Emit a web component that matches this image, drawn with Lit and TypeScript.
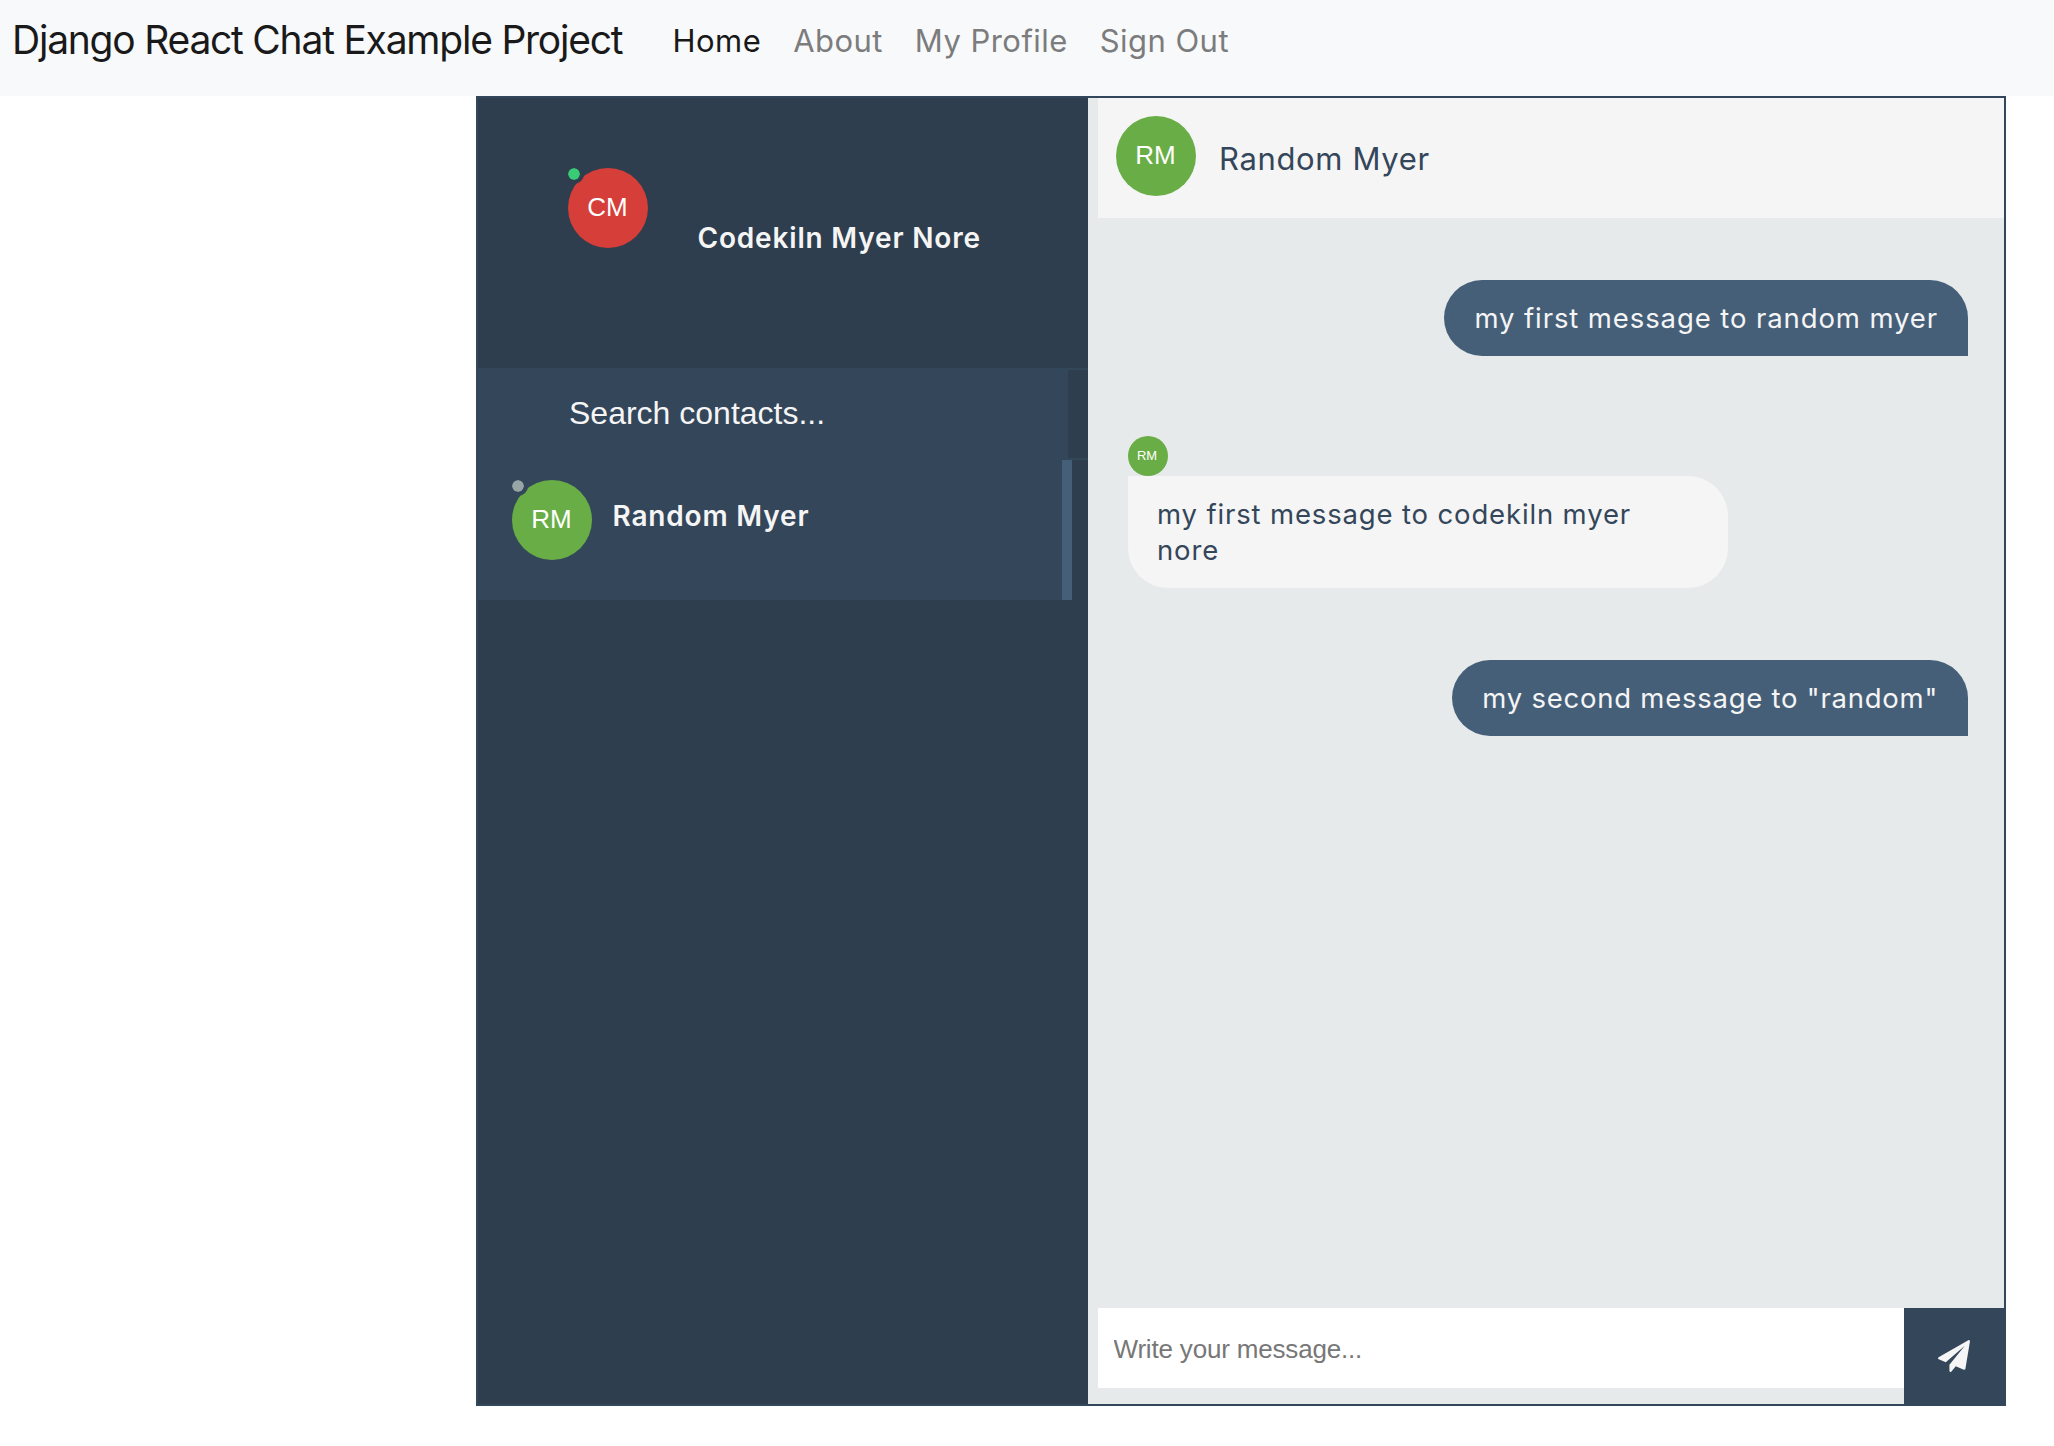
import { LitElement, html, css, nothing } from "lit";
import { customElement, property } from "lit/decorators.js";
import { classMap } from "lit/directives/class-map.js";
import { styleMap } from "lit/directives/style-map.js";

interface Message {
  text: string;
  sent: boolean;
  tracking: number;
}

const NAV = ["Home", "About", "My Profile", "Sign Out"];

const MESSAGES: Message[] = [
  { text: "my first message to random myer", sent: true, tracking: 0.9 },
  { text: "my first message to codekiln myer nore", sent: false, tracking: 0.85 },
  { text: 'my second message to "random"', sent: true, tracking: 0.76 },
];

@customElement("user-avatar")
export class UserAvatar extends LitElement {
  @property() initials = "";
  @property() tone = "green";
  @property() status = "";
  @property({ type: Boolean }) small = false;

  static styles = css`
    :host {
      display: block;
      flex: none;
    }
    .circle {
      position: relative;
      box-sizing: border-box;
      display: flex;
      align-items: center;
      justify-content: center;
      width: 80px;
      height: 80px;
      padding: 0 1px 2px 0;
      border-radius: 50%;
      color: #fff;
      font: 26px/30px "Liberation Sans", Arial, sans-serif;
    }
    .small {
      width: 40px;
      height: 40px;
      padding: 0 2px 0 0;
      font-size: 13px;
      line-height: 16px;
    }
    .green {
      background: #69ad46;
    }
    .red {
      background: #d53e39;
    }
    .dot {
      position: absolute;
      left: -4px;
      top: -4px;
      width: 12px;
      height: 12px;
      border: 4px solid;
      border-radius: 50%;
      background-clip: padding-box;
    }
    .online {
      background-color: #3acc74;
      border-color: #2e3e4e;
    }
    .offline {
      background-color: #96a5a6;
      border-color: #34465a;
    }
  `;

  render() {
    return html`<div
      class=${classMap({ circle: true, small: this.small, [this.tone]: true })}
    >
      ${this.initials}
      ${this.status ? html`<span class="dot ${this.status}"></span>` : nothing}
    </div>`;
  }
}

@customElement("app-root")
export class AppRoot extends LitElement {
  static styles = css`
    :host {
      display: block;
      min-height: 1446px;
      background: #fff;
      font-family: Inter, "Noto Sans", sans-serif;
    }
    .navbar {
      display: flex;
      align-items: center;
      box-sizing: border-box;
      height: 96px;
      padding: 0 0 16px 12px;
      background: #f8f9fb;
      white-space: nowrap;
    }
    .brand {
      width: 644.5px;
      font-size: 39px;
      line-height: 60px;
      letter-spacing: -1.23px;
      color: #1a1a1a;
    }
    .links {
      display: flex;
      padding-top: 2px;
    }
    .link {
      padding: 0 16px;
      font-size: 31px;
      line-height: 48px;
      letter-spacing: 0.45px;
      color: #7c7c7d;
    }
    .current {
      color: #181819;
    }
    .frame {
      display: flex;
      box-sizing: border-box;
      width: 1530px;
      height: 1310px;
      margin-left: 476px;
      border: 2px solid #32475b;
    }
    .side {
      display: flex;
      flex-direction: column;
      width: 610px;
      background: #2e3e4e;
      color: #f5f5f5;
    }
    .profile {
      display: flex;
      box-sizing: border-box;
      height: 270px;
      padding: 70px 0 0 90px;
    }
    .name {
      font-size: 28px;
      line-height: 40px;
      font-weight: 600;
      letter-spacing: 0.82px;
      white-space: nowrap;
    }
    .profile .name {
      margin: 50px 0 0 49.5px;
    }
    .search {
      display: flex;
      height: 88px;
      border-top: 2px solid #33475a;
      border-bottom: 2px solid #33475a;
    }
    .search-input {
      box-sizing: border-box;
      width: 590px;
      height: 88px;
      padding: 0 0 2px 91px;
      border: 0;
      border-radius: 0;
      outline: 0;
      background: #34465a;
      color: #f5f5f5;
      font: 32px "Liberation Sans", Arial, sans-serif;
    }
    .search-input::placeholder {
      color: #f5f5f5;
      opacity: 1;
    }
    .contact {
      display: flex;
      box-sizing: border-box;
      width: 594px;
      height: 140px;
      padding: 20px 0 0 34px;
      border-right: 10px solid #465f79;
      background: #34465a;
    }
    .contact .name {
      margin: 16px 0 0 20.5px;
    }
    .content {
      display: flex;
      flex: 1;
      flex-direction: column;
      min-width: 0;
      padding-left: 10px;
      background: #e6eaea;
    }
    .head {
      display: flex;
      box-sizing: border-box;
      height: 120px;
      padding: 18px 0 0 18px;
      background: #f5f5f5;
    }
    .title {
      margin: 19px 0 0 23px;
      font-size: 31px;
      line-height: 48px;
      letter-spacing: 0.65px;
      color: #34465a;
    }
    .messages {
      display: flex;
      flex: 1;
      flex-direction: column;
      padding: 62px 36px 0 30px;
    }
    .message {
      display: flex;
      flex-direction: column;
      align-items: flex-start;
      margin-bottom: 72px;
    }
    .mine {
      align-items: flex-end;
      margin-bottom: 80px;
    }
    .bubble {
      box-sizing: border-box;
      max-width: 600px;
      padding: 20px 30px 20px 29px;
      border-radius: 0 40px 40px 40px;
      background: #f5f5f5;
      color: #34465a;
      font-size: 27.5px;
      line-height: 36px;
    }
    .mine .bubble {
      padding: 20px 30px;
      border-radius: 38px 38px 0 38px;
      background: #465f79;
      color: #f5f5f5;
      white-space: nowrap;
    }
    .composer {
      display: flex;
      align-items: flex-start;
      height: 96px;
    }
    .message-input {
      box-sizing: border-box;
      flex: 1;
      min-width: 0;
      height: 80px;
      padding: 2px 0 0 15.5px;
      border: 0;
      border-radius: 0;
      outline: 0;
      background: #fff;
      font: 26px "Liberation Sans", Arial, sans-serif;
      letter-spacing: -0.18px;
    }
    .message-input::placeholder {
      color: #777;
      opacity: 1;
    }
    .send {
      display: flex;
      align-items: center;
      justify-content: center;
      width: 100px;
      height: 96px;
      padding: 0;
      border: 0;
      background: #34465a;
    }
    .plane {
      width: 32px;
      height: 32px;
      fill: #f5f5f5;
    }
  `;

  render() {
    return html`
      <nav class="navbar">
        <div class="brand">Django React Chat Example Project</div>
        <div class="links">
          ${NAV.map(
            (label, i) =>
              html`<a class=${classMap({ link: true, current: i === 0 })}>${label}</a>`
          )}
        </div>
      </nav>
      <main class="frame">
        <aside class="side">
          <div class="profile">
            <user-avatar initials="CM" tone="red" status="online"></user-avatar>
            <div class="name">Codekiln Myer Nore</div>
          </div>
          <div class="search">
            <input class="search-input" placeholder="Search contacts..." />
          </div>
          <div class="contact">
            <user-avatar initials="RM" status="offline"></user-avatar>
            <div class="name">Random Myer</div>
          </div>
        </aside>
        <section class="content">
          <header class="head">
            <user-avatar initials="RM"></user-avatar>
            <div class="title">Random Myer</div>
          </header>
          <div class="messages">
            ${MESSAGES.map(
              (m) => html`<div class=${classMap({ message: true, mine: m.sent })}>
                ${m.sent
                  ? nothing
                  : html`<user-avatar initials="RM" small></user-avatar>`}
                <div
                  class="bubble"
                  style=${styleMap({ letterSpacing: `${m.tracking}px` })}
                >${m.text}</div>
              </div>`
            )}
          </div>
          <div class="composer">
            <input class="message-input" placeholder="Write your message..." />
            <button class="send" aria-label="Send">
              <svg class="plane" viewBox="0 0 1792 1792">
                <path
                  d="M1764 11q33 24 27 64l-256 1536q-5 29-32 45-14 8-31 8-11 0-24-5l-453-185-242 295q-18 23-49 23-13 0-22-4-19-7-30.500-23.500t-11.500-36.500v-349l864-1059-1069 925-395-162q-37-14-40-55-2-40 32-59l1664-960q15-9 32-9 20 0 36 11z"
                />
              </svg>
            </button>
          </div>
        </section>
      </main>
    `;
  }
}
